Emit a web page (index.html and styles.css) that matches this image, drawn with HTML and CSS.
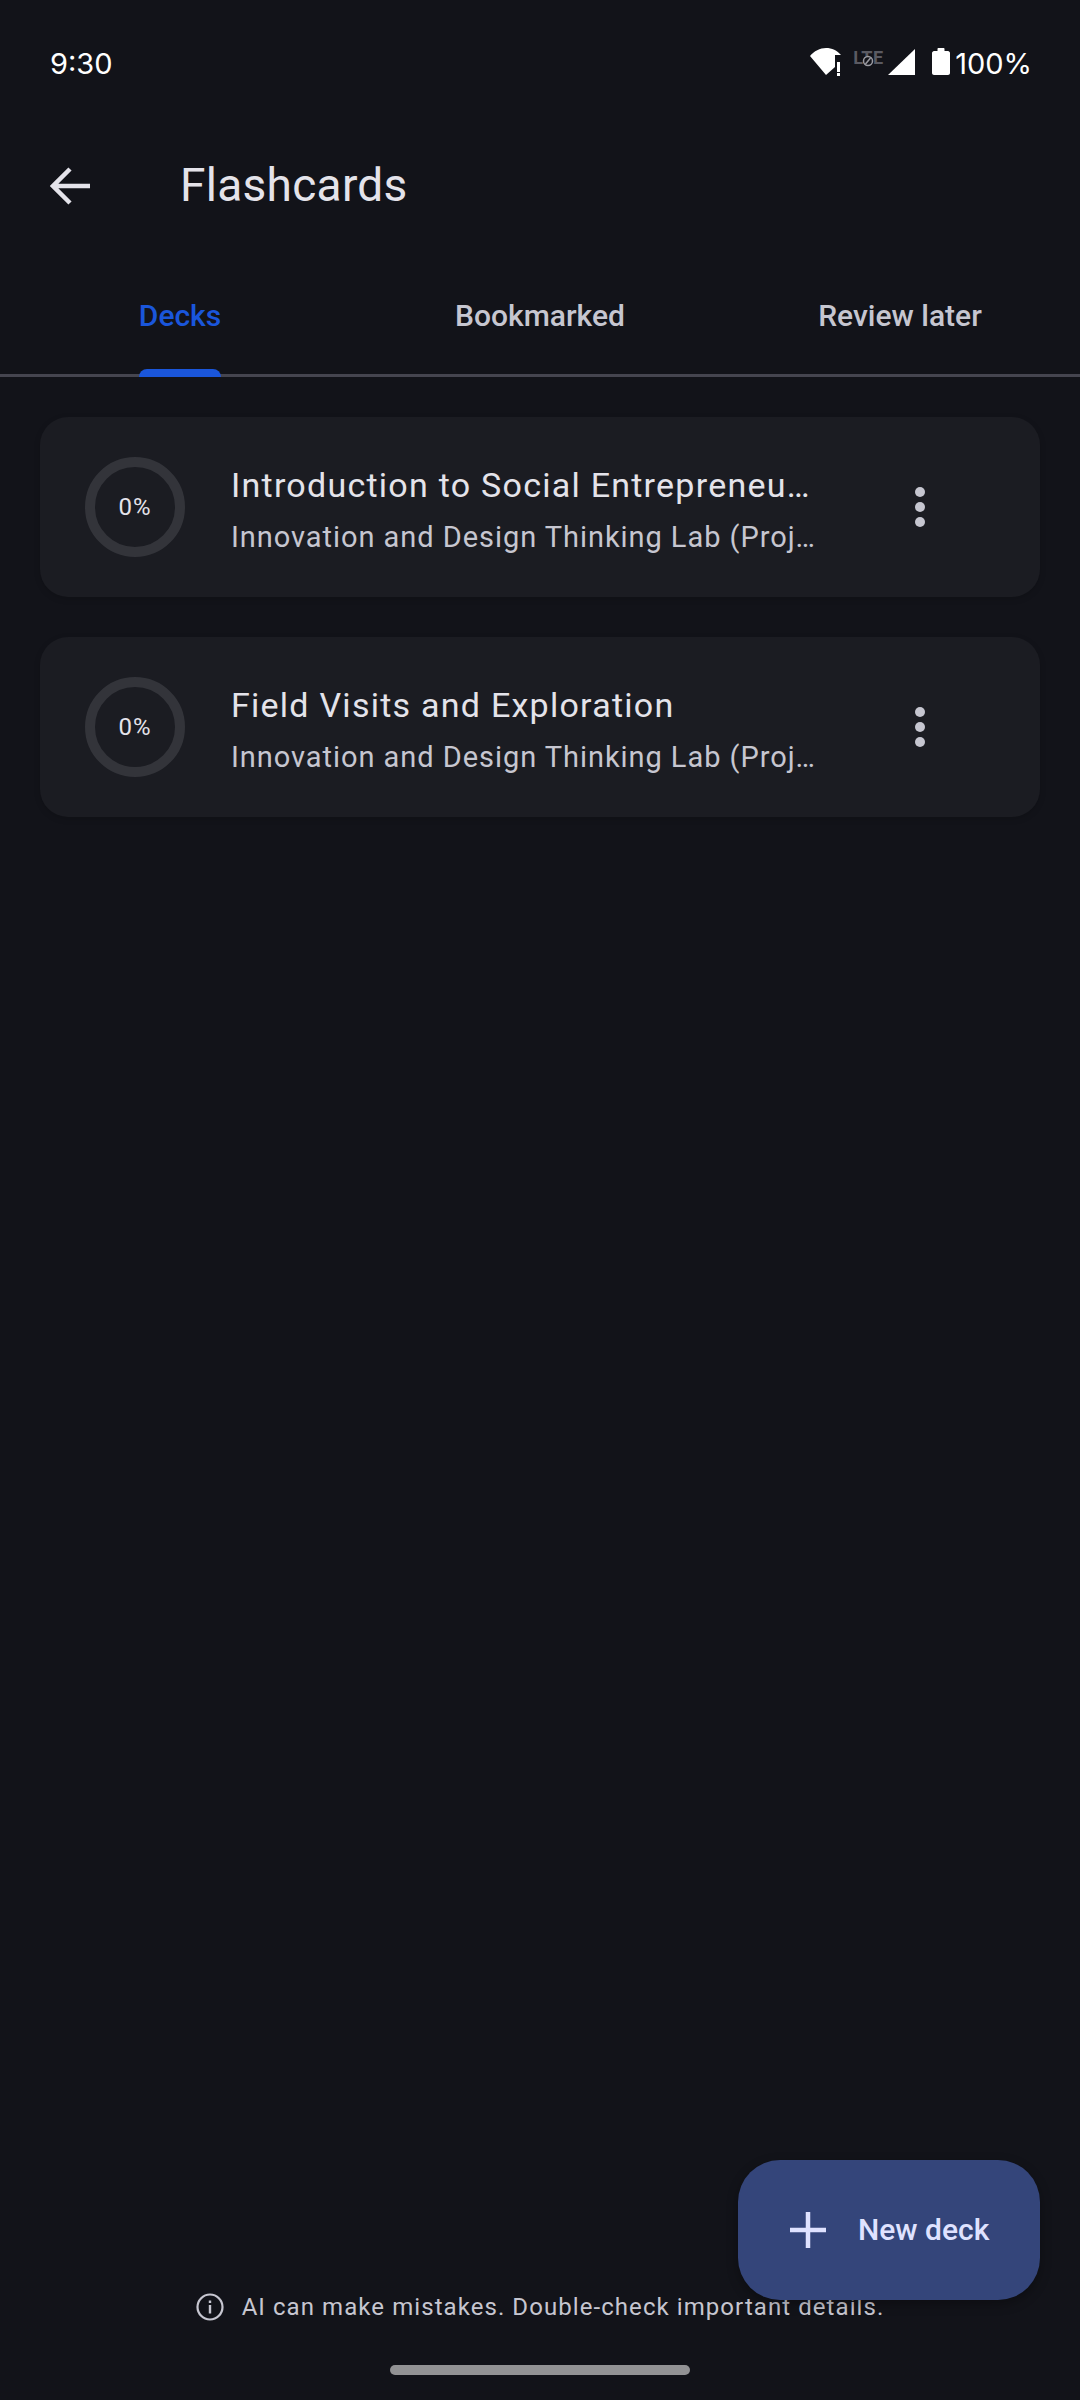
FILE: index.html
```html
<!DOCTYPE html>
<html lang="en">
<head>
<meta charset="utf-8">
<title>Flashcards</title>
<link rel="stylesheet" href="styles.css">
</head>
<body>
<div class="screen">
  <div class="status">
    <span class="time">9:30</span>
    <div class="status-right">
      <svg class="wifi" viewBox="0 0 34 28" width="34" height="28"><path d="M0 8C4 3 10 0 16 0c6 0 11 2.500 15 7h-6v12l-9 8z" fill="#fff"/><path d="M27 14h3v10h-3zM27 25h3v3h-3z" fill="#fff"/></svg>
      <span class="lte"><span class="lte-text">LTE</span><svg class="lte-off" viewBox="0 0 12 12" width="12" height="12"><circle cx="6" cy="6" r="4.500" fill="#121319" stroke="#9a9aa0" stroke-width="1.500"/><path d="M3.500 9 8.500 3" stroke="#9a9aa0" stroke-width="1.500"/></svg></span>
      <svg class="signal" viewBox="0 0 27 26" width="27" height="26"><path d="M27 0v26H0z" fill="#fff"/></svg>
      <svg class="battery" viewBox="0 0 18 27" width="18" height="27"><path d="M5.500 1c0-.6.4-1 1-1h5c.6 0 1 .4 1 1v2h3.500c1 0 2 1 2 2v20c0 1-1 2-2 2H2c-1 0-2-1-2-2V5c0-1 1-2 2-2h3.500z" fill="#fff"/></svg>
      <span class="pct">100%</span>
    </div>
  </div>
  <header class="appbar">
    <svg class="back" viewBox="0 0 40 40" width="40" height="40"><path d="M3 20H40M20 3 3 20l17 17" fill="none" stroke="#e4e3ea" stroke-width="4.500"/></svg>
    <h1 class="title">Flashcards</h1>
  </header>
  <nav class="tabs">
    <div class="tab"><span class="tab-label active">Decks<i class="indicator"></i></span></div>
    <div class="tab"><span class="tab-label">Bookmarked</span></div>
    <div class="tab"><span class="tab-label">Review later</span></div>
  </nav>
  <main class="list">
    <article class="card">
      <div class="ring"><span>0%</span></div>
      <div class="info">
        <div class="card-title">Introduction to Social Entrepreneu…</div>
        <div class="card-sub">Innovation and Design Thinking Lab (Proj…</div>
      </div>
      <div class="more"><i></i><i></i><i></i></div>
    </article>
    <article class="card">
      <div class="ring"><span>0%</span></div>
      <div class="info">
        <div class="card-title">Field Visits and Exploration</div>
        <div class="card-sub">Innovation and Design Thinking Lab (Proj…</div>
      </div>
      <div class="more"><i></i><i></i><i></i></div>
    </article>
  </main>
  <footer class="notice">
    <svg class="info-icon" viewBox="0 0 28 28" width="28" height="28"><circle cx="14" cy="14" r="12.500" fill="none" stroke="#c6c6d0" stroke-width="2.200"/><path d="M12.800 12h2.400v8.500h-2.400zM12.800 7.500h2.400V10h-2.400z" fill="#c6c6d0"/></svg>
    <span>AI can make mistakes. Double-check important details.</span>
  </footer>
  <div class="home-wrap"><div class="home"></div></div>
  <button class="fab"><svg viewBox="0 0 36 36" width="36" height="36"><path d="M0 18h36M18 0v36" stroke="#dfe2ff" stroke-width="4.500"/></svg><span>New deck</span></button>
</div>
</body>
</html>
```
FILE: styles.css
```css
* { box-sizing: border-box; }
html, body { margin: 0; padding: 0; background: #121319; }
body { font-family: Roboto, "Liberation Sans", sans-serif; }
.screen { position: relative; width: 1080px; height: 2400px; display: flex; flex-direction: column; background: #121319; overflow: hidden; }

.status { height: 125px; padding: 47px 48px 0 50px; display: flex; justify-content: space-between; align-items: flex-start; color: #fff; font-family: Inter, sans-serif; font-size: 29px; line-height: 30px; }
.time { padding-top: 2px; }
.status-right { display: flex; align-items: flex-start; }
.wifi { display: block; margin-top: 1px; }
.lte { position: relative; display: block; width: 30px; height: 20px; margin: 1px 0 0 9px; }
.lte-text { display: block; font: 700 18px/20px Roboto, sans-serif; letter-spacing: .5px; color: #5a5a62; }
.lte-off { position: absolute; left: 9px; top: 7px; }
.signal { display: block; margin: 2px 0 0 5px; }
.battery { display: block; margin: 1px 0 0 17px; }
.pct { display: block; margin-left: 5px; padding-top: 2px; }

.appbar { height: 120px; padding-left: 50px; display: flex; align-items: center; gap: 90px; }
.back { display: block; margin-top: 2px; }
.title { margin: 0; font-size: 46px; font-weight: 400; letter-spacing: .3px; color: #e4e3ea; line-height: 60px; }

.tabs { display: grid; grid-template-columns: repeat(3, 1fr); height: 132px; border-bottom: 3px solid #45454f; }
.tab { display: flex; justify-content: center; }
.tab-label { position: relative; height: 129px; padding-top: 51px; font-size: 30px; line-height: 40px; font-weight: 500; color: #c6c6d0; }
.tab-label.active { color: #1a56db; }
.indicator { position: absolute; left: 0; right: 0; bottom: -3px; height: 8px; background: #1a56db; border-radius: 8px 8px 0 0; }

.list { flex: 1; display: flex; flex-direction: column; gap: 40px; padding: 40px 40px 0; }
.card { height: 180px; background: #1b1c22; border-radius: 28px; padding-left: 45px; display: flex; align-items: center; box-shadow: 0 2px 6px rgba(0,0,0,.15); }
.ring { width: 100px; height: 100px; flex: none; border-radius: 50%; border: 10px solid #33343a; display: flex; align-items: center; justify-content: center; color: #e4e3ea; font-size: 24px; letter-spacing: 1px; }
.info { width: 590px; margin-left: 46px; padding-top: 6px; display: flex; flex-direction: column; gap: 10px; min-width: 0; }
.card-title { font-size: 34px; line-height: 44px; letter-spacing: 1.250px; color: #e4e3ea; white-space: nowrap; }
.card-sub { font-size: 29px; line-height: 40px; letter-spacing: .95px; color: #c6c6d0; white-space: nowrap; }
.more { margin-left: 94px; display: flex; flex-direction: column; gap: 5px; }
.more i { display: block; width: 10px; height: 10px; border-radius: 50%; background: #c6c6d0; }

.notice { display: flex; align-items: center; justify-content: center; gap: 18px; height: 30px; margin-bottom: 43px; color: #c6c6d0; font-size: 24px; letter-spacing: 1.070px; }
.info-icon { display: block; flex: none; }
.home-wrap { display: flex; justify-content: center; height: 35px; }
.home { width: 300px; height: 10px; background: #929294; border-radius: 5px; }

.fab { position: absolute; right: 40px; top: 2160px; width: 302px; height: 140px; border: 0; border-radius: 42px; background: #34457a; color: #dfe2ff; display: flex; align-items: center; padding: 0 0 0 52px; gap: 32px; font: 500 30px/40px Roboto, sans-serif; box-shadow: 0 4px 12px rgba(0,0,0,.3); }
.fab svg { display: block; }
```
